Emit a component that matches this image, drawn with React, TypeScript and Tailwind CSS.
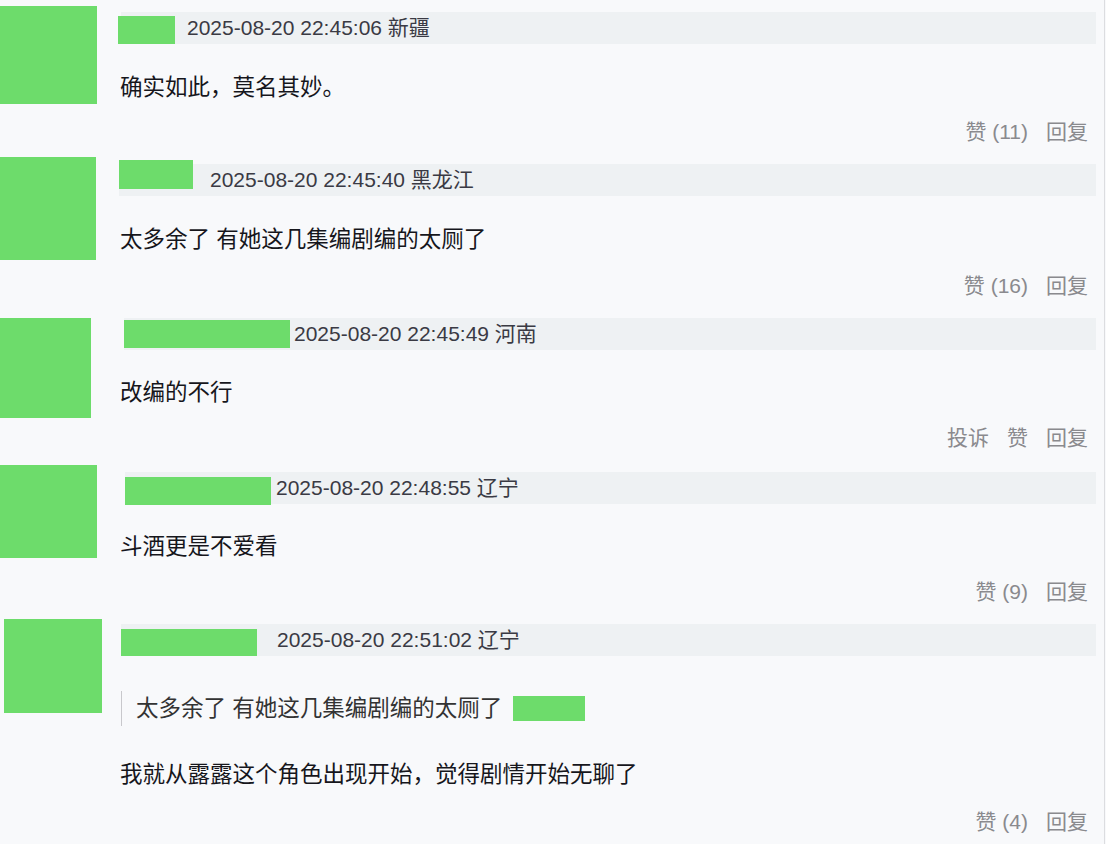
import React from "react";

const font = "font-['Liberation_Sans','Noto_Sans_CJK_SC',sans-serif]";

type C = {
  wrap: string;
  avatar: string;
  col: string;
  header: string;
  name: string;
  dateGap: string;
  date: string;
  content: string;
  contentCls: string;
  quote?: boolean;
  actions: string[];
  actionsCls: string;
};

const comments: C[] = [
  {
    wrap: "h-[157px] pt-[6px]",
    avatar: "ml-0 w-[97px] h-[98px]",
    col: "ml-[24px]",
    header: "mt-[6px]",
    name: "w-[57px] h-[28px] mt-[4px] -ml-[3px]",
    dateGap: "ml-[12px]",
    date: "2025-08-20 22:45:06 新疆",
    content: "确实如此，莫名其妙。",
    contentCls: "mt-[30px] -ml-[1px]",
    actions: ["赞 (11)", "回复"],
    actionsCls: "mt-[16px]",
  },
  {
    wrap: "h-[161px]",
    avatar: "ml-0 w-[96px] h-[103px]",
    col: "ml-[23px]",
    header: "mt-[7px]",
    name: "w-[74px] h-[29px] -mt-[4px]",
    dateGap: "ml-[17px]",
    date: "2025-08-20 22:45:40 黑龙江",
    content: "太多余了 有她这几集编剧编的太厕了",
    contentCls: "mt-[30px] ml-[1px]",
    actions: ["赞 (16)", "回复"],
    actionsCls: "mt-[18px]",
  },
  {
    wrap: "h-[147px]",
    avatar: "ml-0 w-[91px] h-[100px]",
    col: "ml-[33px]",
    header: "mt-0",
    name: "w-[166px] h-[28px] mt-[2px]",
    dateGap: "ml-[4px]",
    date: "2025-08-20 22:45:49 河南",
    content: "改编的不行",
    contentCls: "mt-[29px] -ml-[4px]",
    actions: ["投诉", "赞", "回复"],
    actionsCls: "mt-[17px]",
  },
  {
    wrap: "h-[154px]",
    avatar: "ml-0 w-[97px] h-[93px]",
    col: "ml-[28px]",
    header: "mt-[7px]",
    name: "w-[146px] h-[28px] mt-[5px]",
    dateGap: "ml-[5px]",
    date: "2025-08-20 22:48:55 辽宁",
    content: "斗酒更是不爱看",
    contentCls: "mt-[29px] -ml-[5px]",
    actions: ["赞 (9)", "回复"],
    actionsCls: "mt-[17px]",
  },
  {
    wrap: "h-[225px]",
    avatar: "ml-[4px] w-[98px] h-[94px]",
    col: "ml-[19px]",
    header: "mt-[5px]",
    name: "w-[136px] h-[27px] mt-[5px]",
    dateGap: "ml-[20px]",
    date: "2025-08-20 22:51:02 辽宁",
    content: "我就从露露这个角色出现开始，觉得剧情开始无聊了",
    contentCls: "mt-[35px] -ml-[1px]",
    quote: true,
    actions: ["赞 (4)", "回复"],
    actionsCls: "mt-[19px]",
  },
];

function Comment({ c }: { c: C }) {
  return (
    <div className={`flex ${c.wrap}`}>
      <div className={`shrink-0 bg-[#6ddc6b] ${c.avatar}`} />
      <div className={`flex-1 flex flex-col mr-[8px] ${c.col}`}>
        <div className={`h-[32px] bg-[#eef1f3] flex items-start ${c.header}`}>
          <div className={`shrink-0 bg-[#6ddc6b] ${c.name}`} />
          <div
            className={`text-[21px] leading-[32px] text-[#3a3a44] ${c.dateGap}`}
          >
            {c.date}
          </div>
        </div>
        {c.quote && (
          <div className="mt-[35px] h-[35px] border-l border-[#c8c8cc] flex items-center pl-[14px]">
            <span className="text-[22.5px] leading-[28px] text-[#333]">
              太多余了 有她这几集编剧编的太厕了
            </span>
            <div className="ml-[11px] w-[72px] h-[25px] bg-[#6ddc6b]" />
          </div>
        )}
        <div
          className={`text-[22.5px] leading-[28px] text-[#16161c] ${c.contentCls}`}
        >
          {c.content}
        </div>
        <div
          className={`flex justify-end gap-[18px] pr-[8px] text-[21px] leading-[28px] text-[#8a8a8e] ${c.actionsCls}`}
        >
          {c.actions.map((a) => (
            <span key={a}>{a}</span>
          ))}
        </div>
      </div>
    </div>
  );
}

export default function App() {
  return (
    <div className={`w-[1106px] h-[844px] overflow-hidden bg-[#f8f9fb] ${font}`}>
      <div className="w-[1105px] h-full border-r border-[#dcdde0]">
        {comments.map((c, i) => (
          <Comment key={i} c={c} />
        ))}
      </div>
    </div>
  );
}
